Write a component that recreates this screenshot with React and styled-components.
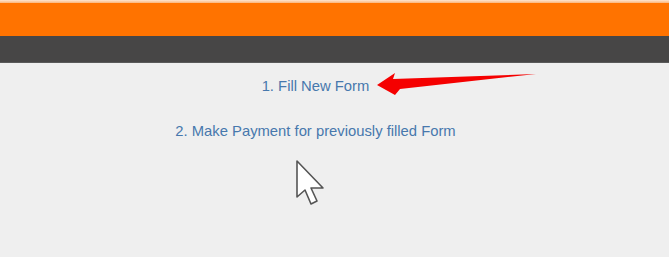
import styled, { createGlobalStyle } from 'styled-components';

const GlobalStyle = createGlobalStyle`
  html, body {
    margin: 0;
    padding: 0;
    background: #efefef;
  }
  body {
    font-family: 'Liberation Sans', Arial, sans-serif;
  }
`;

const Page = styled.div`
  position: relative;
  width: 669px;
  height: 257px;
  overflow: hidden;
  background: #efefef;
`;

const TopEdge = styled.div`
  height: 3px;
  background: linear-gradient(#fde6d2, #fbb57a);
`;

const OrangeBar = styled.div`
  height: 33px;
  background: #ff7300;
`;

const DarkBar = styled.div`
  height: 26px;
  background: #474646;
  border-bottom: 1px solid #5a5a5a;
`;

const Content = styled.div`
  display: flex;
  flex-direction: column;
  align-items: center;
  gap: 25px;
  padding: 13px 38px 0 0;
`;

const FormLink = styled.a`
  font-size: 14.8px;
  line-height: 20px;
  color: #4778ad;
  text-decoration: none;
  cursor: pointer;
`;

const Overlay = styled.svg`
  position: absolute;
  left: ${(p) => p.$x}px;
  top: ${(p) => p.$y}px;
  pointer-events: none;
`;

export default function App() {
  return (
    <Page>
      <GlobalStyle />
      <TopEdge />
      <OrangeBar />
      <DarkBar />
      <Content>
        <FormLink>1. Fill New Form</FormLink>
        <FormLink>2. Make Payment for previously filled Form</FormLink>
      </Content>

      {/* red annotation arrow */}
      <Overlay $x={370} $y={65} width="170" height="35" viewBox="370 65 170 35">
        <polygon
          points="377,85 395,73 393,79 536,74 400,89 395,95"
          fill="#f50000"
        />
      </Overlay>

      {/* mouse pointer */}
      <Overlay $x={294} $y={158} width="34" height="50" viewBox="-3 -3 34 50">
        <path
          d="M0 0 L0 36 L8 29 L14 43 L20 40 L14 27 L26 27 Z"
          fill="#ffffff"
          stroke="#555"
          strokeWidth="1.6"
          strokeLinejoin="round"
        />
      </Overlay>
    </Page>
  );
}
